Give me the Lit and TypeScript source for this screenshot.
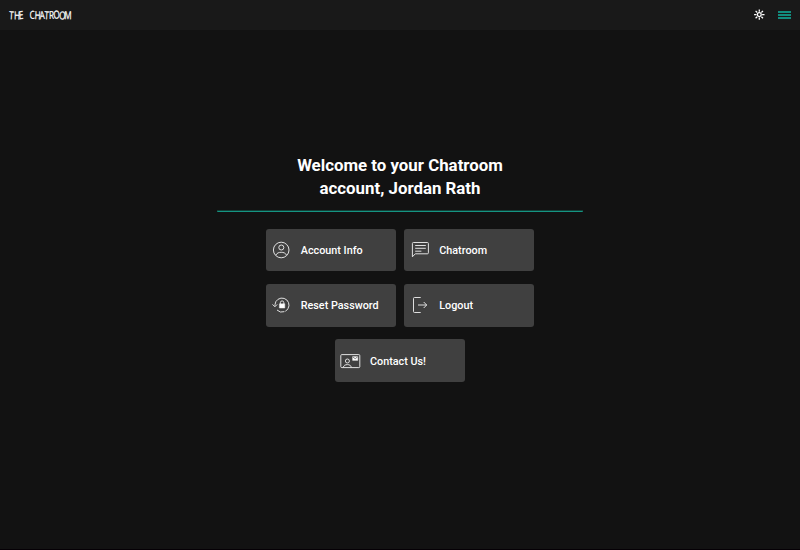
import { LitElement, html, css, svg } from "lit";
import { customElement, property } from "lit/decorators.js";

const icons: Record<string, unknown> = {
  account: svg`<circle cx="10.2" cy="11" r="7.8"/><circle cx="10.3" cy="8.5" r="2.5"/><path d="M4.8 16.2C6 13.9 7.9 13.3 10.2 13.3s4.2.6 5.4 2.9"/>`,
  chat: svg`<path d="M2.4 17.8V4.5a1 1 0 0 1 1-1h14a1 1 0 0 1 1 1v9.3a1 1 0 0 1-1 1H5.3z"/><path d="M5.2 6.5h10.6M5.2 9.3h10.6M5.2 12.2h6.2"/>`,
  reset: svg`<path d="M4 11.8V10.6a7 7 0 1 1 2 5.4" stroke-dasharray="30 1"/><path d="M1.5 10.4l2.4 2.4 2.3-2.4"/><path class="solid" d="M8.4 9.8h5.4v4.2H8.4z"/><path d="M9.4 10V8.6a1.7 1.7 0 0 1 3.4 0V10"/>`,
  logout: svg`<path d="M10.7 3.5H4.5a1 1 0 0 0-1 1v13a1 1 0 0 0 1 1h6.2M8 11h8.6M13.7 8l3 3-3 3"/>`,
  contact: svg`<rect x=".8" y="4.6" width="19" height="13" rx="1"/><circle cx="7.4" cy="11" r="2"/><path d="M3.3 17.3c.5-2 2-2.7 4.1-2.7s3.4.7 3.9 2.7"/><path class="solid" d="M12.6 6.6h5.2v3.8h-5.2z"/><path class="crease" d="M12.8 6.9l2.4 1.8 2.4-1.8"/>`,
};

@customElement("menu-card")
class MenuCard extends LitElement {
  @property() icon = "";
  @property() label = "";
  static styles = css`
    :host { display: flex; align-items: center; box-sizing: border-box; width: 130px; height: 42.6px; padding-left: 5.4px; border-radius: 3px; background: #404040; color: #fff; font: 500 10.8px/16px Roboto, sans-serif; }
    svg { width: 22px; height: 22px; margin-right: 7.6px; fill: none; stroke: #e8e8e8; stroke-width: .95; flex: none; }
    .solid { fill: #fff; stroke-width: .5; }
    .crease { stroke: #777; }
    span { white-space: nowrap; padding-top: 2.4px; }
  `;
  render() {
    return html`<svg viewBox="0 0 22 22">${icons[this.icon]}</svg><span>${this.label}</span>`;
  }
}

@customElement("app-root")
class AppRoot extends LitElement {
  static styles = css`
    :host { display: flex; flex-direction: column; box-sizing: border-box; height: 550px; background: #121212; border-bottom: 1px solid #050005; font-family: Roboto, sans-serif; }
    header { display: flex; justify-content: space-between; align-items: center; box-sizing: border-box; height: 30px; flex: none; padding: 0 9px; background: #191919; }
    .logo { width: 64px; height: 16px; fill: #fff; stroke: #fff; stroke-width: .25; font: 11px "Open Sans", sans-serif; overflow: visible; }
    .actions { display: flex; align-items: center; gap: 13px; }
    .sun { width: 12px; height: 12px; stroke: #fff; stroke-width: 1.25; fill: none; }
    .burger { display: flex; flex-direction: column; gap: 1px; width: 13px; }
    .burger i { height: 2px; background: #128c7e; }
    main { display: flex; flex-direction: column; align-items: center; padding-top: 123px; }
    h1 { display: flex; flex-direction: column; align-items: center; margin: 0; padding-top: 1px; width: 366px; height: 57px; border-bottom: 1px solid #159482; box-shadow: 0 -1px #123f37 inset; border-radius: 1px; color: #fff; font: 700 16.85px/23px Roboto, sans-serif; }
    .cards { display: flex; flex-wrap: wrap; justify-content: center; width: 270px; gap: 12.8px 8.5px; margin-top: 16.6px; }
  `;
  render() {
    return html`
      <header>
        <svg class="logo" viewBox="0 0 64 16">
          <text transform="scale(.74 1)" y="12 12.2 12.3 12 12 12 12.2 12 12 12 12 12" x="0 6.7 13.4 20 28 34.5 41.5 47.5 54 60.5 67.5 74.5" rotate="4 2 -5 0 -3 3 -4 4 0 -6 5 1">THE CHATROOM</text>
        </svg>
        <div class="actions">
          <svg class="sun" viewBox="0 0 12 12"><circle cx="6.3" cy="5.6" r="1.9"/><path d="M6.3.4v2.4M6.3 8.4v2.4M1.1 5.6h2.4M9.1 5.6h2.4M2.6 1.9l1.6 1.6M8.4 7.7l1.6 1.6M2.6 9.3l1.6-1.6M8.4 3.5l1.6-1.6"/></svg>
          <div class="burger"><i></i><i></i><i></i></div>
        </div>
      </header>
      <main>
        <h1><span>Welcome to your Chatroom</span><span>account, Jordan Rath</span></h1>
        <div class="cards">
          <menu-card icon="account" label="Account Info"></menu-card>
          <menu-card icon="chat" label="Chatroom"></menu-card>
          <menu-card icon="reset" label="Reset Password"></menu-card>
          <menu-card icon="logout" label="Logout"></menu-card>
          <menu-card icon="contact" label="Contact Us!"></menu-card>
        </div>
      </main>`;
  }
}
